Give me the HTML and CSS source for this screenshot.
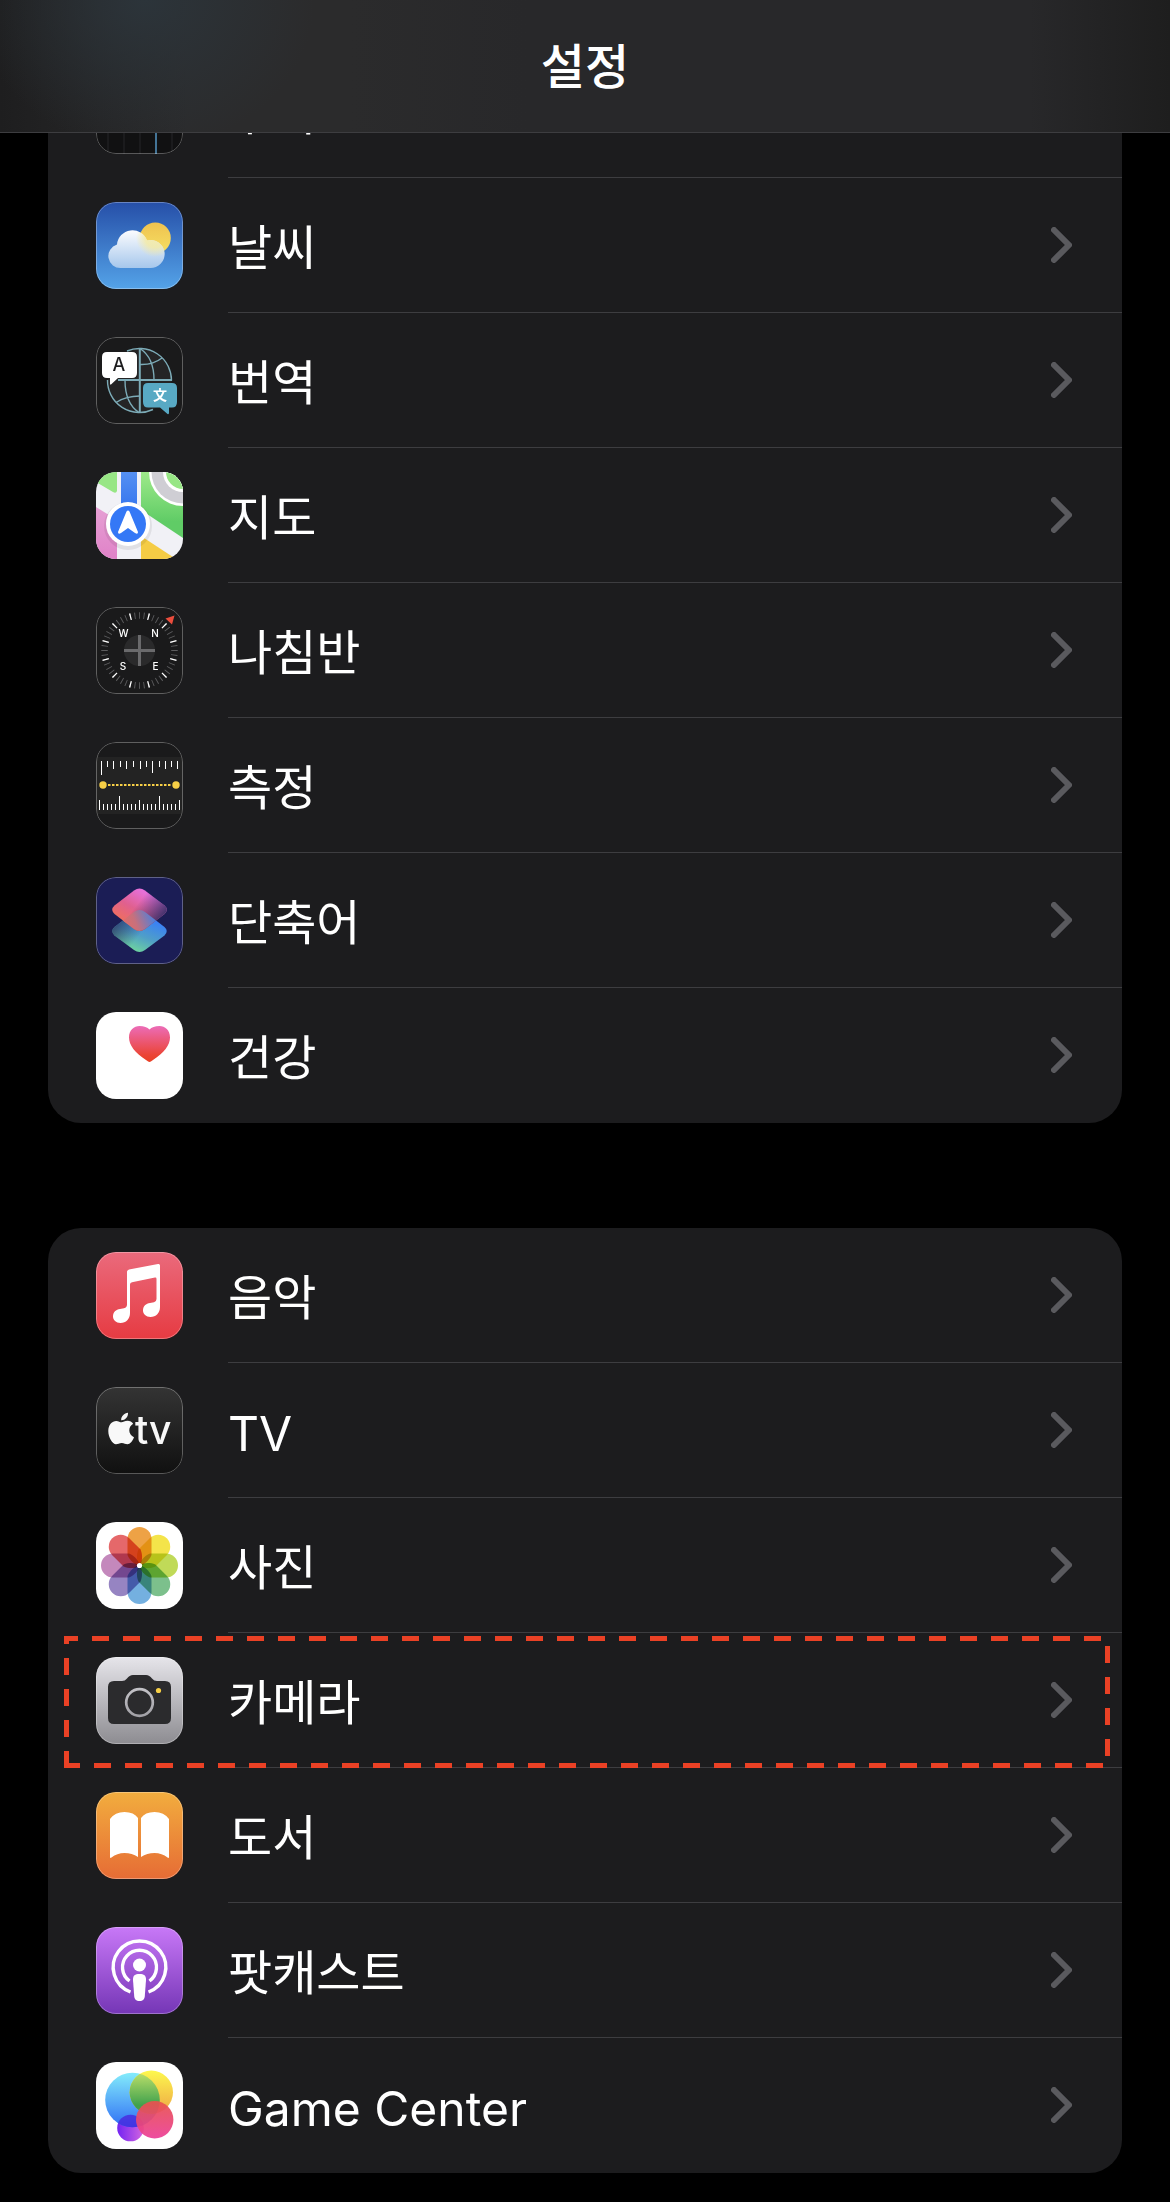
FILE: index.html
```html
<!DOCTYPE html>
<html lang="ko">
<head>
  <meta charset="UTF-8" />
  <meta name="viewport" content="width=device-width, initial-scale=1" />
  <title>설정</title>
  <link rel="stylesheet" href="styles.css">
</head>
<body>

<header class="navbar">
  <h1>설정</h1>
</header>

<main>
  <ul class="group">
    <li class="row">
      <a href="#stocks">
        <svg class="icon" viewBox="0 0 87 87" aria-hidden="true">
          <rect width="87" height="87" fill="#111112"/>
          <path d="M12 0V87M28 0V87M44 0V87M76 0V87" stroke="#262628"/>
          <path d="M60 0V87" stroke="#5a9fd0" stroke-width="1.4"/>
          <rect class="rim" x=".5" y=".5" width="86" height="86" rx="19.5"/>
        </svg>
        <span class="body"><span class="label">주식</span>
          <svg class="chevron" viewBox="0 0 21 36" aria-hidden="true"><path d="M3 3L18 18L3 33"/></svg></span>
      </a>
    </li>
    <li class="row">
      <a href="#weather">
        <svg class="icon" viewBox="0 0 87 87" aria-hidden="true">
          <defs>
            <linearGradient id="sky" x2="0" y2="1"><stop stop-color="#264fa8"/><stop offset="1" stop-color="#54a3e8"/></linearGradient>
            <linearGradient id="sun" x2="0" y2="1"><stop stop-color="#efc24f"/><stop offset="1" stop-color="#f6e063"/></linearGradient>
            <linearGradient id="cloud" x2="0" y2="1"><stop stop-color="#fbfcfe"/><stop offset="1" stop-color="#a6c7ec"/></linearGradient>
            <radialGradient id="glow"><stop offset=".5" stop-color="#f5eaa0"/><stop offset="1" stop-color="#f5eaa0" stop-opacity="0"/></radialGradient>
            <clipPath id="cloudClip"><path d="M25 66A12 12 0 0 1 21 42.500A15.500 15.500 0 0 1 51 38.500A14 14 0 1 1 54 66Z"/></clipPath>
          </defs>
          <rect width="87" height="87" fill="url(#sky)"/>
          <circle cx="59.300" cy="36" r="15.500" fill="url(#sun)"/>
          <path d="M25 66A12 12 0 0 1 21 42.500A15.500 15.500 0 0 1 51 38.500A14 14 0 1 1 54 66Z" fill="url(#cloud)"/>
          <circle cx="59" cy="36" r="19" fill="url(#glow)" opacity=".8" clip-path="url(#cloudClip)"/>
          <rect class="rim" x=".5" y=".5" width="86" height="86" rx="19.5"/>
        </svg>
        <span class="body"><span class="label">날씨</span>
          <svg class="chevron" viewBox="0 0 21 36" aria-hidden="true"><path d="M3 3L18 18L3 33"/></svg></span>
      </a>
    </li>
    <li class="row">
      <a href="#translate">
        <svg class="icon" viewBox="0 0 87 87" aria-hidden="true">
          <rect width="87" height="87" fill="#1a1a1b"/>
          <circle cx="43.500" cy="43.500" r="32" fill="#242425"/>
          <g fill="none" stroke="#7cabb7" stroke-width="1.400">
            <path d="M31 14A32 32 0 0 1 75.500 43.500M11.500 43A32 32 0 0 0 57 72.500"/>
            <path d="M44 11.500C54 18 58 30 58 43M44 27.500Q57 28 66 21M29 43C29 57 33 69 43 75.500M44 59Q30 59 20 65.500"/>
            <path d="M43.800 11.500V75.500M22 43H76" stroke-width="2"/>
          </g>
          <path d="M11 15H36Q41 15 41 20V36Q41 41 36 41H22L15 47.500Q14 48 14 46.500V41H11Q6 41 6 36V20Q6 15 11 15Z" fill="#fff"/>
          <path d="M52 46H76Q81 46 81 51V65Q81 70.500 76 70.500H73V76Q73 77.500 71.500 77L64 70.500H52Q47 70.500 47 65V51Q47 46 52 46Z" fill="#58a9c4"/>
          <text class="latin-mark" x="23" y="34">A</text>
          <text class="han-mark" x="64" y="63">文</text>
          <rect class="rim" x=".5" y=".5" width="86" height="86" rx="19.5"/>
        </svg>
        <span class="body"><span class="label">번역</span>
          <svg class="chevron" viewBox="0 0 21 36" aria-hidden="true"><path d="M3 3L18 18L3 33"/></svg></span>
      </a>
    </li>
    <li class="row">
      <a href="#maps">
        <svg class="icon" viewBox="0 0 87 87" aria-hidden="true">
          <defs>
            <linearGradient id="park" x2="0" y2="1"><stop stop-color="#9eea8a"/><stop offset=".75" stop-color="#60cc66"/></linearGradient>
            <linearGradient id="route" x2="0" y2="1"><stop stop-color="#5590f2"/><stop offset="1" stop-color="#3273ee"/></linearGradient>
            <linearGradient id="pink" x2="0" y2="1"><stop stop-color="#e6a0d4"/><stop offset="1" stop-color="#e082c8"/></linearGradient>
          </defs>
          <rect width="87" height="87" fill="#f1f1f6"/>
          <path d="M0 0H21V19Q20 22 17 20L0 10Z" fill="#97e685"/>
          <path d="M45 0H87V66L45 38Z" fill="url(#park)"/>
          <path d="M0 35L21 48V87H0Z" fill="url(#pink)"/>
          <path d="M45 64L80 87H45Z" fill="#f5cc45"/>
          <circle cx="87" cy="0" r="34" fill="#fff"/>
          <circle cx="87" cy="0" r="31.500" fill="#cfced4"/>
          <circle cx="87" cy="0" r="20" fill="#fff"/>
          <circle cx="87" cy="0" r="17" fill="#97e685"/>
          <rect x="25" width="16" height="40" fill="url(#route)"/>
          <circle cx="32" cy="54" r="24" fill="#000" opacity=".07"/>
          <circle cx="32" cy="52" r="22" fill="#fff"/>
          <circle cx="32" cy="52" r="18" fill="#3478f6"/>
          <path d="M30.500 39.500Q32 37.500 33.500 39.500L42 60Q42 63 39 61L32 56L25 61Q22 63 22 60Z" fill="#fff"/>
        </svg>
        <span class="body"><span class="label">지도</span>
          <svg class="chevron" viewBox="0 0 21 36" aria-hidden="true"><path d="M3 3L18 18L3 33"/></svg></span>
      </a>
    </li>
    <li class="row">
      <a href="#compass">
        <svg class="icon" viewBox="0 0 87 87" aria-hidden="true">
          <rect width="87" height="87" fill="#1a1a1b"/>
          <circle cx="43.500" cy="43.500" r="15.500" fill="#2a2a2b"/>
          <path d="M43.500 28V59M28 43.500H59" stroke="#6a6a6c" stroke-width="3"/>
          <g fill="none" stroke-width="6.500">
            <circle cx="43.500" cy="43.500" r="35" stroke="#5c5c5e" pathLength="480" stroke-dasharray="2 8" stroke-dashoffset="1"/>
            <circle cx="43.500" cy="43.500" r="35" stroke="#fff" pathLength="120" stroke-dasharray=".7 9.3" stroke-dashoffset="-4.65"/>
          </g>
          <path d="M78.500 8.500L69.500 11.500L76 17.500Z" fill="#eb4d3d"/>
          <g class="points">
            <text x="27.500" y="30">W</text>
            <text x="59" y="30">N</text>
            <text x="27" y="63">S</text>
            <text x="59.500" y="63">E</text>
          </g>
          <rect class="rim" x=".5" y=".5" width="86" height="86" rx="19.5"/>
        </svg>
        <span class="body"><span class="label">나침반</span>
          <svg class="chevron" viewBox="0 0 21 36" aria-hidden="true"><path d="M3 3L18 18L3 33"/></svg></span>
      </a>
    </li>
    <li class="row">
      <a href="#measure">
        <svg class="icon" viewBox="0 0 87 87" aria-hidden="true">
          <rect width="87" height="87" fill="#1a1a1b"/>
          <rect y="15" width="87" height="57" fill="#232323"/>
          <g stroke="#fff" fill="none">
            <path d="M5.500 19V33M11.500 19V25M17.500 19V27M24.500 19V25M30.500 19V27M37.500 19V25M44.500 19V27M50.500 19V25M56.500 19V31M63.500 19V25M69.500 19V27M75.500 19V25M81.500 19V27"/>
            <path d="M3.500 58V68M7.500 62V68M11.500 62V68M15.500 62V68M19.500 62V68M23.500 54V68M27.500 62V68M31.500 62V68M35.500 62V68M39.500 62V68M43.500 58V68M47.500 62V68M51.500 62V68M55.500 62V68M59.500 62V68M63.500 54V68M67.500 62V68M71.500 62V68M75.500 62V68M79.500 62V68M83.500 58V68"/>
          </g>
          <path d="M12 43H76" stroke="#f7cf46" stroke-width="1.800" stroke-dasharray="2.500 1.500"/>
          <circle cx="7" cy="43" r="3.700" fill="#f7cf46"/>
          <circle cx="80" cy="43" r="3.700" fill="#f7cf46"/>
          <rect class="rim" x=".5" y=".5" width="86" height="86" rx="19.5"/>
        </svg>
        <span class="body"><span class="label">측정</span>
          <svg class="chevron" viewBox="0 0 21 36" aria-hidden="true"><path d="M3 3L18 18L3 33"/></svg></span>
      </a>
    </li>
    <li class="row">
      <a href="#shortcuts">
        <svg class="icon" viewBox="0 0 87 87" aria-hidden="true">
          <defs>
            <linearGradient id="layerLow" x1=".35" y1="1" x2=".75" y2=".25"><stop stop-color="#72d99a"/><stop offset=".5" stop-color="#4f9fc8"/><stop offset="1" stop-color="#3a80f5"/></linearGradient>
            <linearGradient id="layerShade" x1="0" y1=".3" x2=".5" y2=".6"><stop stop-color="#2a3560" stop-opacity=".9"/><stop offset="1" stop-color="#2a3560" stop-opacity="0"/></linearGradient>
            <linearGradient id="layerTop" x1=".1" y1=".75" x2=".6" y2=".1"><stop stop-color="#f0705a"/><stop offset=".5" stop-color="#e0608f"/><stop offset="1" stop-color="#e670d8"/></linearGradient>
            <linearGradient id="layerFade" x1=".5" y1=".3" x2="1" y2=".6"><stop stop-color="#3a2f68" stop-opacity="0"/><stop offset="1" stop-color="#3a2f68"/></linearGradient>
            <linearGradient id="layerMix" x1=".2" y1=".6" x2=".85" y2=".4"><stop stop-color="#ea6c62"/><stop offset=".45" stop-color="#c8707c"/><stop offset="1" stop-color="#4a80dd"/></linearGradient>
            <clipPath id="topClip"><path d="M38 13.500Q43.500 9.500 49 13.500L68.500 28.500Q73 32.500 68.500 37L49 52Q43.500 56 38 52L18.500 37Q14 32.500 18.500 28.500Z"/></clipPath>
          </defs>
          <rect width="87" height="87" fill="#1b1d55"/>
          <path d="M38 35Q43.500 31 49 35L68.500 50Q73 54 68.500 58.500L49 73Q43.500 77 38 73L18.500 58.500Q14 54 18.500 50Z" fill="url(#layerLow)"/>
          <path d="M38 35Q43.500 31 49 35L68.500 50Q73 54 68.500 58.500L49 73Q43.500 77 38 73L18.500 58.500Q14 54 18.500 50Z" fill="url(#layerShade)"/>
          <path d="M38 13.500Q43.500 9.500 49 13.500L68.500 28.500Q73 32.500 68.500 37L49 52Q43.500 56 38 52L18.500 37Q14 32.500 18.500 28.500Z" fill="url(#layerTop)"/>
          <path d="M38 13.500Q43.500 9.500 49 13.500L68.500 28.500Q73 32.500 68.500 37L49 52Q43.500 56 38 52L18.500 37Q14 32.500 18.500 28.500Z" fill="url(#layerFade)"/>
          <path d="M38 35Q43.500 31 49 35L68.500 50Q73 54 68.500 58.500L49 73Q43.500 77 38 73L18.500 58.500Q14 54 18.500 50Z" fill="url(#layerMix)" clip-path="url(#topClip)"/>
          <rect class="rim" x=".5" y=".5" width="86" height="86" rx="19.5"/>
        </svg>
        <span class="body"><span class="label">단축어</span>
          <svg class="chevron" viewBox="0 0 21 36" aria-hidden="true"><path d="M3 3L18 18L3 33"/></svg></span>
      </a>
    </li>
    <li class="row">
      <a href="#health">
        <svg class="icon" viewBox="0 0 87 87" aria-hidden="true">
          <defs>
            <linearGradient id="heart" x2="0" y2="1"><stop stop-color="#ec6cb8"/><stop offset=".8" stop-color="#eb4537"/><stop offset="1" stop-color="#ea4025"/></linearGradient>
          </defs>
          <rect width="87" height="87" fill="#fff"/>
          <path d="M53.500 50Q52.500 50 50 48C39 41 33 33 33 25.500C33 18 38 14 43.500 14C48 14 51.500 15.500 53.500 17.500C55.500 15.500 59 14 63.500 14C69 14 74 18 74 25.500C74 33 68 41 57 48Q54.500 50 53.500 50Z" fill="url(#heart)"/>
        </svg>
        <span class="body"><span class="label">건강</span>
          <svg class="chevron" viewBox="0 0 21 36" aria-hidden="true"><path d="M3 3L18 18L3 33"/></svg></span>
      </a>
    </li>
  </ul>

  <ul class="group">
    <li class="row">
      <a href="#music">
        <svg class="icon" viewBox="0 0 87 87" aria-hidden="true">
          <defs>
            <linearGradient id="music" x2="0" y2="1"><stop stop-color="#ea6a7c"/><stop offset="1" stop-color="#e63b42"/></linearGradient>
          </defs>
          <rect width="87" height="87" fill="url(#music)"/>
          <path d="M33 17.500L62 12Q64 11.500 64 13.500V55C64 61 60 65 54.500 65C50 65 47 62 47 58.500C47 54 50 51.500 54 51L58 50.200Q60.500 49.500 60.500 47V27Q60.500 25.300 59 25.600L36 30.300Q34 30.800 34 32.500V61C34 67 30 71 24.500 71C20 71 17 68 17 64.500C17 60 20 57.500 24 57L28 56.200Q31 55.500 31 52.500V20Q31 18 33 17.500Z" fill="#fff"/>
          <rect class="rim" x=".5" y=".5" width="86" height="86" rx="19.5"/>
        </svg>
        <span class="body"><span class="label">음악</span>
          <svg class="chevron" viewBox="0 0 21 36" aria-hidden="true"><path d="M3 3L18 18L3 33"/></svg></span>
      </a>
    </li>
    <li class="row">
      <a href="#tv">
        <svg class="icon" viewBox="0 0 87 87" aria-hidden="true">
          <defs>
            <linearGradient id="tv" x2="0" y2="1"><stop stop-color="#343434"/><stop offset="1" stop-color="#101010"/></linearGradient>
          </defs>
          <rect width="87" height="87" fill="url(#tv)"/>
          <path d="M32 25.800C32.300 30 29 33.500 25.200 33.300C24.900 29.500 28.300 26 32 25.800ZM25.500 35.300C27 35.300 28.800 33.800 31.500 33.800C33.800 33.800 36 35 37.200 36.800C31.500 40 32.300 47.800 38 50.200C36.500 54 34 57.200 31.500 57.200C29.300 57.200 28.300 55.900 25.800 55.900C23.200 55.900 22 57.200 20 57.200C16.500 57.200 12.300 50.500 12.300 44C12.300 37.500 16.300 33.900 20.200 33.900C22.500 33.900 24.200 35.300 25.500 35.300Z" fill="#f8f8f8"/>
          <text class="tv-mark" x="39" y="57">tv</text>
          <rect class="rim" x=".5" y=".5" width="86" height="86" rx="19.5"/>
        </svg>
        <span class="body"><span class="label latin">TV</span>
          <svg class="chevron" viewBox="0 0 21 36" aria-hidden="true"><path d="M3 3L18 18L3 33"/></svg></span>
      </a>
    </li>
    <li class="row">
      <a href="#photos">
        <svg class="icon" viewBox="0 0 87 87" aria-hidden="true">
          <defs>
            <path id="petal" d="M31.500 17A12 12 0 0 1 55.500 17V33C53 39 48 43 43.500 43.500C39 43 34 39 31.500 33Z"/>
          </defs>
          <rect width="87" height="87" fill="#fff"/>
          <g class="petals">
            <use href="#petal" fill="#eea245"/>
            <use href="#petal" fill="#f4e44a" transform="rotate(45 43.500 43.500)"/>
            <use href="#petal" fill="#c0da58" transform="rotate(90 43.500 43.500)"/>
            <use href="#petal" fill="#7cc08c" transform="rotate(135 43.500 43.500)"/>
            <use href="#petal" fill="#74b0e0" transform="rotate(180 43.500 43.500)"/>
            <use href="#petal" fill="#9684c2" transform="rotate(225 43.500 43.500)"/>
            <use href="#petal" fill="#c488bc" transform="rotate(270 43.500 43.500)"/>
            <use href="#petal" fill="#e5686a" transform="rotate(315 43.500 43.500)"/>
          </g>
          <circle cx="43.500" cy="43.500" r="2.600" fill="#fff"/>
        </svg>
        <span class="body"><span class="label">사진</span>
          <svg class="chevron" viewBox="0 0 21 36" aria-hidden="true"><path d="M3 3L18 18L3 33"/></svg></span>
      </a>
    </li>
    <li class="row">
      <a href="#camera">
        <svg class="icon" viewBox="0 0 87 87" aria-hidden="true">
          <defs>
            <linearGradient id="camera" x2="0" y2="1"><stop stop-color="#e6e5ea"/><stop offset="1" stop-color="#8d8c91"/></linearGradient>
            <linearGradient id="lens" x2="0" y2="1"><stop stop-color="#c2c1c6"/><stop offset="1" stop-color="#a2a1a6"/></linearGradient>
          </defs>
          <rect width="87" height="87" fill="url(#camera)"/>
          <path d="M18 24H26Q29 24 31 21.500Q33.500 18 37 18H50Q53.500 18 56 21.500Q58 24 61 24H69Q75 24 75 30V61Q75 67 69 67H18Q12 67 12 61V30Q12 24 18 24Z" fill="#2b2b2d"/>
          <circle cx="43.500" cy="45.500" r="13.300" fill="none" stroke="url(#lens)" stroke-width="2.700"/>
          <circle cx="62.500" cy="33.500" r="2.600" fill="#f7cf46"/>
          <rect class="rim" x=".5" y=".5" width="86" height="86" rx="19.5"/>
        </svg>
        <span class="body"><span class="label">카메라</span>
          <svg class="chevron" viewBox="0 0 21 36" aria-hidden="true"><path d="M3 3L18 18L3 33"/></svg></span>
      </a>
      <!-- dashed callout round the row -->
      <svg class="callout" viewBox="0 0 1046 132" preserveAspectRatio="none" aria-hidden="true">
        <path d="M2.500 132V2.500H1043.500V129.500H0"/>
      </svg>
    </li>
    <li class="row">
      <a href="#books">
        <svg class="icon" viewBox="0 0 87 87" aria-hidden="true">
          <defs>
            <linearGradient id="books" x2="0" y2="1"><stop stop-color="#f2ad3e"/><stop offset="1" stop-color="#e66c35"/></linearGradient>
          </defs>
          <rect width="87" height="87" fill="url(#books)"/>
          <path d="M14 27Q19 20 28.500 20Q38 20 42 26V65Q36 61 28.500 61Q21 61 15.500 65.500Q14 66.500 14 65Z" fill="#fff"/>
          <path d="M73 27Q68 20 58.500 20Q49 20 45 26V65Q51 61 58.500 61Q66 61 71.500 65.500Q73 66.500 73 65Z" fill="#fff"/>
          <rect class="rim" x=".5" y=".5" width="86" height="86" rx="19.5"/>
        </svg>
        <span class="body"><span class="label">도서</span>
          <svg class="chevron" viewBox="0 0 21 36" aria-hidden="true"><path d="M3 3L18 18L3 33"/></svg></span>
      </a>
    </li>
    <li class="row">
      <a href="#podcasts">
        <svg class="icon" viewBox="0 0 87 87" aria-hidden="true">
          <defs>
            <linearGradient id="podcasts" x2="0" y2="1"><stop stop-color="#c878f7"/><stop offset="1" stop-color="#7536b6"/></linearGradient>
          </defs>
          <rect width="87" height="87" fill="url(#podcasts)"/>
          <g fill="none" stroke="#fff" stroke-width="3.400">
            <path d="M34.500 65A26.300 26.300 0 1 1 52.500 65"/>
            <path d="M33.500 54A17 17 0 1 1 53.500 54"/>
          </g>
          <circle cx="43.500" cy="38" r="6.500" fill="#fff"/>
          <path d="M43.500 47C48 47 50.200 48.500 50 53L48.800 69C48.500 72.500 47 74 43.500 74S38.500 72.500 38.200 69L37 53C36.800 48.500 39 47 43.500 47Z" fill="#fff"/>
          <rect class="rim" x=".5" y=".5" width="86" height="86" rx="19.5"/>
        </svg>
        <span class="body"><span class="label">팟캐스트</span>
          <svg class="chevron" viewBox="0 0 21 36" aria-hidden="true"><path d="M3 3L18 18L3 33"/></svg></span>
      </a>
    </li>
    <li class="row">
      <a href="#gamecenter">
        <svg class="icon" viewBox="0 0 87 87" aria-hidden="true">
          <defs>
            <linearGradient id="gcBlue" x2="0" y2="1"><stop stop-color="#84ecfb"/><stop offset="1" stop-color="#2f6ff5"/></linearGradient>
            <linearGradient id="gcYellow" x2="0" y2="1"><stop stop-color="#fdf84e"/><stop offset="1" stop-color="#eea545"/></linearGradient>
            <linearGradient id="gcGreen" x2="0" y2="1"><stop stop-color="#c4e36c"/><stop offset=".8" stop-color="#40a14d"/></linearGradient>
            <linearGradient id="gcRed" x2="0" y2="1"><stop stop-color="#e8524c"/><stop offset="1" stop-color="#ec3f98"/></linearGradient>
            <linearGradient id="gcPurple"><stop stop-color="#7324f2"/><stop offset="1" stop-color="#d465e0"/></linearGradient>
            <clipPath id="gcClip"><circle cx="36.500" cy="38" r="27.300"/></clipPath>
          </defs>
          <rect width="87" height="87" fill="#fff"/>
          <circle cx="34.500" cy="66" r="13.300" fill="url(#gcPurple)"/>
          <circle cx="36.500" cy="38" r="27.300" fill="url(#gcBlue)"/>
          <circle cx="34.500" cy="66" r="13.300" fill="#4a20dc" opacity=".75" clip-path="url(#gcClip)"/>
          <circle cx="55.300" cy="30.300" r="21.700" fill="url(#gcYellow)"/>
          <circle cx="55.300" cy="30.300" r="21.700" fill="url(#gcGreen)" clip-path="url(#gcClip)"/>
          <circle cx="58.700" cy="57.700" r="18.700" fill="url(#gcRed)" opacity=".93"/>
        </svg>
        <span class="body"><span class="label latin">Game Center</span>
          <svg class="chevron" viewBox="0 0 21 36" aria-hidden="true"><path d="M3 3L18 18L3 33"/></svg></span>
      </a>
    </li>
  </ul>
</main>

</body>
</html>
```

FILE: styles.css
```css
:root {
  --bg: #000; --card: #1c1c1e; --line: #3d3d40;
  --text: #fff; --chevron: #5a5a5e; --callout: #ea4125;
}
* { box-sizing: border-box; }
body {
  margin: 0; background: var(--bg); color: var(--text);
  font-family: Inter, "Noto Sans CJK KR", sans-serif;
}

.navbar {
  position: sticky; top: 0; z-index: 2;
  padding: 28px 0 34px; border-bottom: 1px solid var(--line);
  background:
    radial-gradient(ellipse 170px 150px at 145px 0, #2c343a, transparent),
    linear-gradient(90deg, #1e1e1f, #2b2b2c 16%, #2b2b2c 30%, #28282a 45%, #28282a 88%, #1e1e1e);
}
h1 {
  margin: 0; text-align: center;
  font-size: 48px; line-height: 70px; font-weight: 500;
  font-family: "Noto Sans CJK KR", sans-serif;
}

main { margin-top: -90px; padding: 0 48px 29px; }
.group {
  list-style: none; margin: 0 0 105px; padding: 0;
  background: var(--card); border-radius: 33px;
}
.group:last-child { margin-bottom: 0; }

.row { position: relative; }
.row a {
  display: flex; align-items: center; gap: 45px;
  height: 135px; padding-left: 48px;
  color: inherit; text-decoration: none;
}
.body {
  flex: 1; align-self: stretch;
  display: flex; align-items: center; justify-content: space-between;
  padding-right: 50px; border-bottom: 1px solid var(--line);
}
.row:last-child .body { border-bottom-color: transparent; }
.label {
  font-family: "Noto Sans CJK KR", sans-serif;
  font-size: 48px; line-height: 72px; font-weight: 400;
  padding-bottom: 2px;
}
.label.latin { font-family: Inter, sans-serif; padding: 7px 0 0; }

.chevron {
  width: 21px; height: 36px; fill: none;
  stroke: var(--chevron); stroke-width: 6;
  stroke-linecap: round; stroke-linejoin: round;
}

.icon { flex: none; width: 87px; height: 87px; border-radius: 20px; }
.rim { fill: none; stroke: #fff; stroke-opacity: .3; }
.petals { isolation: isolate; }
.petals use { mix-blend-mode: multiply; }
.latin-mark, .han-mark, .points { text-anchor: middle; }
.latin-mark { fill: #1c1c1e; font: 500 18px Inter, sans-serif; }
.han-mark { fill: #fff; font: 700 14px "Noto Sans CJK SC", sans-serif; }
.points { fill: #fff; font: 500 10px Inter, sans-serif; }
.tv-mark { fill: #f8f8f8; font: 500 39px Inter, sans-serif; }

.callout {
  position: absolute; top: 3px; left: 16px;
  width: calc(100% - 28px); height: 132px;
  fill: none; stroke: var(--callout);
  stroke-width: 5; stroke-dasharray: 17 14;
  pointer-events: none;
}
```
